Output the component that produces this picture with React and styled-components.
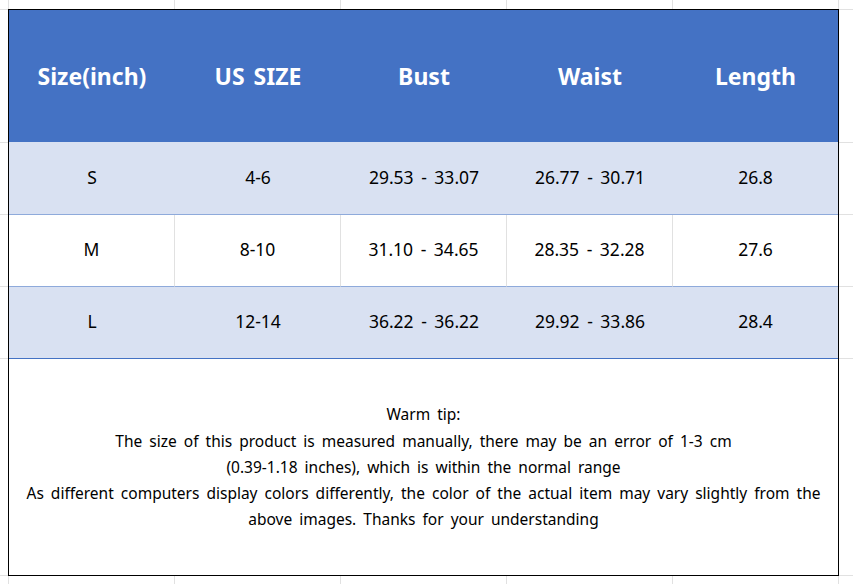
import React from 'react';
import styled, { createGlobalStyle } from 'styled-components';

const Global = createGlobalStyle`
  html, body {
    margin: 0;
    padding: 0;
    background: #ffffff;
  }
  body {
    font-family: "Noto Sans", "Noto Sans CJK KR", sans-serif;
    color: #000;
    word-spacing: 3px;
  }
`;

const colors = {
  header: '#4472c4',
  band: '#d9e1f2',
  rowLine: '#8eaadb',
  grid: '#e1e1e1',
};

const Sheet = styled.div`
  display: grid;
  grid-template-columns: 8px repeat(5, 166px) 1fr;
  grid-template-rows: 9px 133px 72px 72px 72px 217px 1fr;
  width: 100vw;
  height: 100vh;
  overflow: hidden;
`;

const GridCell = styled.div`
  border-left: ${(p) => (p.$noLeft ? 'none' : `1px solid ${colors.grid}`)};
  border-top: ${(p) => (p.$noTop ? 'none' : `1px solid ${colors.grid}`)};
  grid-column: ${(p) => p.$col};
  grid-row: ${(p) => p.$row};
`;

const Table = styled.div`
  grid-column: 2 / 7;
  grid-row: 2 / 7;
  z-index: 1;
  width: calc(100% + 1px);
  height: calc(100% + 1px);
  box-sizing: border-box;
  border: 1px solid #000;
  background: #fff;
  display: grid;
  grid-template-columns: 166px 166px 166px 166px 165px;
  grid-template-rows: 132px 73px 72px 72px 1fr;
`;

const HeadCell = styled.div`
  background: ${colors.header};
  color: #fff;
  font-weight: 700;
  font-size: 23px;
  display: flex;
  align-items: center;
  justify-content: center;
  padding-bottom: 1px;
`;

const DataCell = styled.div`
  box-sizing: border-box;
  background: ${(p) => (p.$band ? colors.band : '#fff')};
  border-bottom: 1px solid ${(p) => (p.$last ? colors.header : colors.rowLine)};
  border-right: ${(p) => (p.$divider ? `1px solid ${colors.grid}` : 'none')};
  font-size: 17.5px;
  display: flex;
  align-items: center;
  justify-content: center;
  padding-bottom: 3px;
`;

const Tip = styled.div`
  grid-column: 1 / -1;
  display: flex;
  flex-direction: column;
  align-items: center;
  justify-content: center;
  text-align: center;
  font-size: 15.5px;
  line-height: 26.3px;
`;

const headers = ['Size(inch)', 'US SIZE', 'Bust', 'Waist', 'Length'];
const rows = [
  ['S', '4-6', '29.53 - 33.07', '26.77 - 30.71', '26.8'],
  ['M', '8-10', '31.10 - 34.65', '28.35 - 32.28', '27.6'],
  ['L', '12-14', '36.22 - 36.22', '29.92 - 33.86', '28.4'],
];

const tipLines = [
  'Warm tip:',
  'The size of this product is measured manually, there may be an error of 1-3 cm',
  '(0.39-1.18 inches), which is within the normal range',
  'As different computers display colors differently, the color of the actual item may vary slightly from the',
  'above images. Thanks for your understanding',
];

export default function App() {
  const bg = [];
  for (let r = 1; r <= 7; r += 1) {
    for (let c = 1; c <= 7; c += 1) {
      bg.push(
        <GridCell key={`${r}-${c}`} $row={r} $col={c} $noLeft={c === 1} $noTop={r === 1} />
      );
    }
  }
  return (
    <>
      <Global />
      <Sheet>
        {bg}
        <Table>
          {headers.map((h) => (
            <HeadCell key={h}>{h}</HeadCell>
          ))}
          {rows.map((row, ri) =>
            row.map((v, ci) => (
              <DataCell
                key={`${ri}-${ci}`}
                $band={ri !== 1}
                $last={ri === rows.length - 1}
                $divider={ri === 1 && ci < row.length - 1}
              >
                {v}
              </DataCell>
            ))
          )}
          <Tip>
            {tipLines.map((l) => (
              <div key={l}>{l}</div>
            ))}
          </Tip>
        </Table>
      </Sheet>
    </>
  );
}
